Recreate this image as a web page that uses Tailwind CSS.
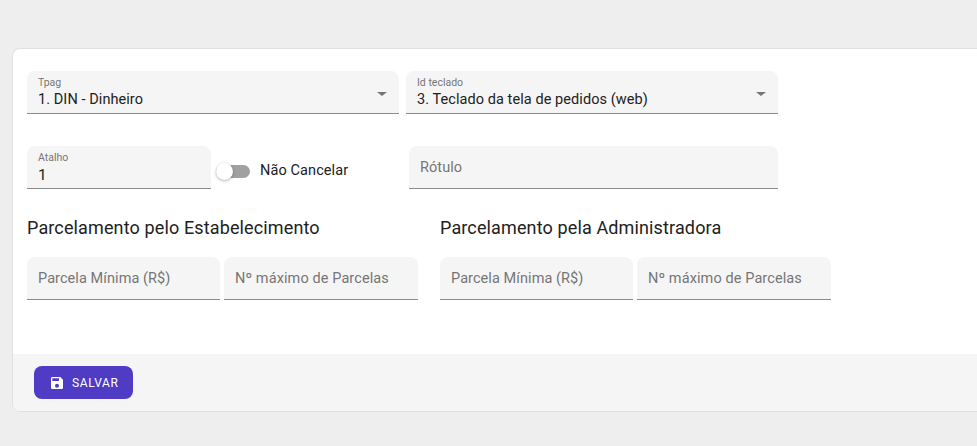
<!DOCTYPE html>
<html lang="pt">
  <head>
    <meta charset="UTF-8" />
    <title>Tpag</title>
    <script src="https://cdn.jsdelivr.net/npm/@tailwindcss/browser@4"></script>
  </head>
  <body class="bg-[#eeeeee] h-[446px] overflow-hidden font-['Roboto',sans-serif] text-[#212121]">
    <div class="pt-[48px] pl-[12px]">
      <div class="w-[990px] h-[364px] bg-white rounded-[8px] border border-[#e0e0e0] overflow-hidden flex flex-col">
        <div class="h-[305px] pl-[14px] pt-[22px]">
          <!-- selects -->
          <div class="flex gap-[7px]">
            <div class="w-[372px] h-[43px] bg-[#f5f5f5] rounded-t-[8px] border-b border-[#8c8c8c] pl-[11px] pt-[6px] relative">
              <div class="text-[10.5px] leading-[12px] text-[#757575]">Tpag</div>
              <div class="text-[14.5px] tracking-[0.07px] leading-[20px] mt-[1px]">1. DIN - Dinheiro</div>
              <div class="absolute right-[12px] top-[21px] w-0 h-0 border-x-[5px] border-x-transparent border-t-[4px] border-t-[#757575]"></div>
            </div>
            <div class="w-[372px] h-[43px] bg-[#f5f5f5] rounded-t-[8px] border-b border-[#8c8c8c] pl-[11px] pt-[6px] relative">
              <div class="text-[10.5px] leading-[12px] text-[#757575]">Id teclado</div>
              <div class="text-[14.5px] tracking-[0.07px] leading-[20px] mt-[1px]">3. Teclado da tela de pedidos (web)</div>
              <div class="absolute right-[12px] top-[21px] w-0 h-0 border-x-[5px] border-x-transparent border-t-[4px] border-t-[#757575]"></div>
            </div>
          </div>
          <!-- atalho -->
          <div class="flex mt-[32px]">
            <div class="w-[184px] h-[43px] bg-[#f5f5f5] rounded-t-[8px] border-b border-[#8c8c8c] pl-[11px] pt-[6px]">
              <div class="text-[10.5px] leading-[12px] text-[#757575]">Atalho</div>
              <div class="text-[15.5px] leading-[20px] mt-[1px]">1</div>
            </div>
            <div class="w-[198px] flex items-center pl-[5px] pt-[7px]">
              <div class="relative w-[34px] h-[13px] rounded-full bg-[#a0a0a0]">
                <div class="absolute left-0 top-[-2px] w-[17px] h-[17px] rounded-full bg-white shadow-[0_1px_3px_rgba(0,0,0,0.3)]"></div>
              </div>
              <span class="ml-[10px] text-[14.5px] tracking-[0.1px]">Não Cancelar</span>
            </div>
            <div class="w-[369px] h-[43px] bg-[#f5f5f5] rounded-t-[8px] border-b border-[#8c8c8c] pl-[11px] pt-[2px] flex items-center text-[14.5px] tracking-[0.07px] text-[#757575]">Rótulo</div>
          </div>
          <!-- parcelamento -->
          <div class="flex mt-[26px]">
            <div class="w-[413px]">
              <h2 class="text-[18px] tracking-[0.13px] leading-[24px] font-normal pt-[1px]">Parcelamento pelo Estabelecimento</h2>
              <div class="flex gap-[4px] mt-[17px]">
                <div class="w-[193px] h-[43px] bg-[#f5f5f5] rounded-t-[8px] border-b border-[#8c8c8c] pl-[11px] pt-[2px] flex items-center text-[14.5px] tracking-[0.07px] text-[#757575]">Parcela Mínima (R$)</div>
                <div class="w-[194px] h-[43px] bg-[#f5f5f5] rounded-t-[8px] border-b border-[#8c8c8c] pl-[11px] pt-[2px] flex items-center text-[14.5px] tracking-[0.1px] text-[#757575]">Nº máximo de Parcelas</div>
              </div>
            </div>
            <div>
              <h2 class="text-[18px] tracking-[0.13px] leading-[24px] font-normal pt-[1px]">Parcelamento pela Administradora</h2>
              <div class="flex gap-[4px] mt-[17px]">
                <div class="w-[193px] h-[43px] bg-[#f5f5f5] rounded-t-[8px] border-b border-[#8c8c8c] pl-[11px] pt-[2px] flex items-center text-[14.5px] tracking-[0.07px] text-[#757575]">Parcela Mínima (R$)</div>
                <div class="w-[194px] h-[43px] bg-[#f5f5f5] rounded-t-[8px] border-b border-[#8c8c8c] pl-[11px] pt-[2px] flex items-center text-[14.5px] tracking-[0.1px] text-[#757575]">Nº máximo de Parcelas</div>
              </div>
            </div>
          </div>
        </div>
        <!-- footer -->
        <div class="flex-1 bg-[#f5f5f5] pl-[21px] pt-[12px]">
          <button class="h-[33px] w-[99px] rounded-[8px] bg-[#4f3bc4] text-white flex items-center pl-[15px] text-[12px] font-normal tracking-[0.6px]">
            <svg width="16" height="16" viewBox="0 0 24 24" fill="currentColor"><path d="M17 3H5a2 2 0 0 0-2 2v14a2 2 0 0 0 2 2h14a2 2 0 0 0 2-2V7l-4-4zm-5 16a3 3 0 1 1 0-6 3 3 0 0 1 0 6zm3-10H5V5h10v4z"/></svg>
            <span class="ml-[7px]">SALVAR</span>
          </button>
        </div>
      </div>
    </div>
  </body>
</html>
